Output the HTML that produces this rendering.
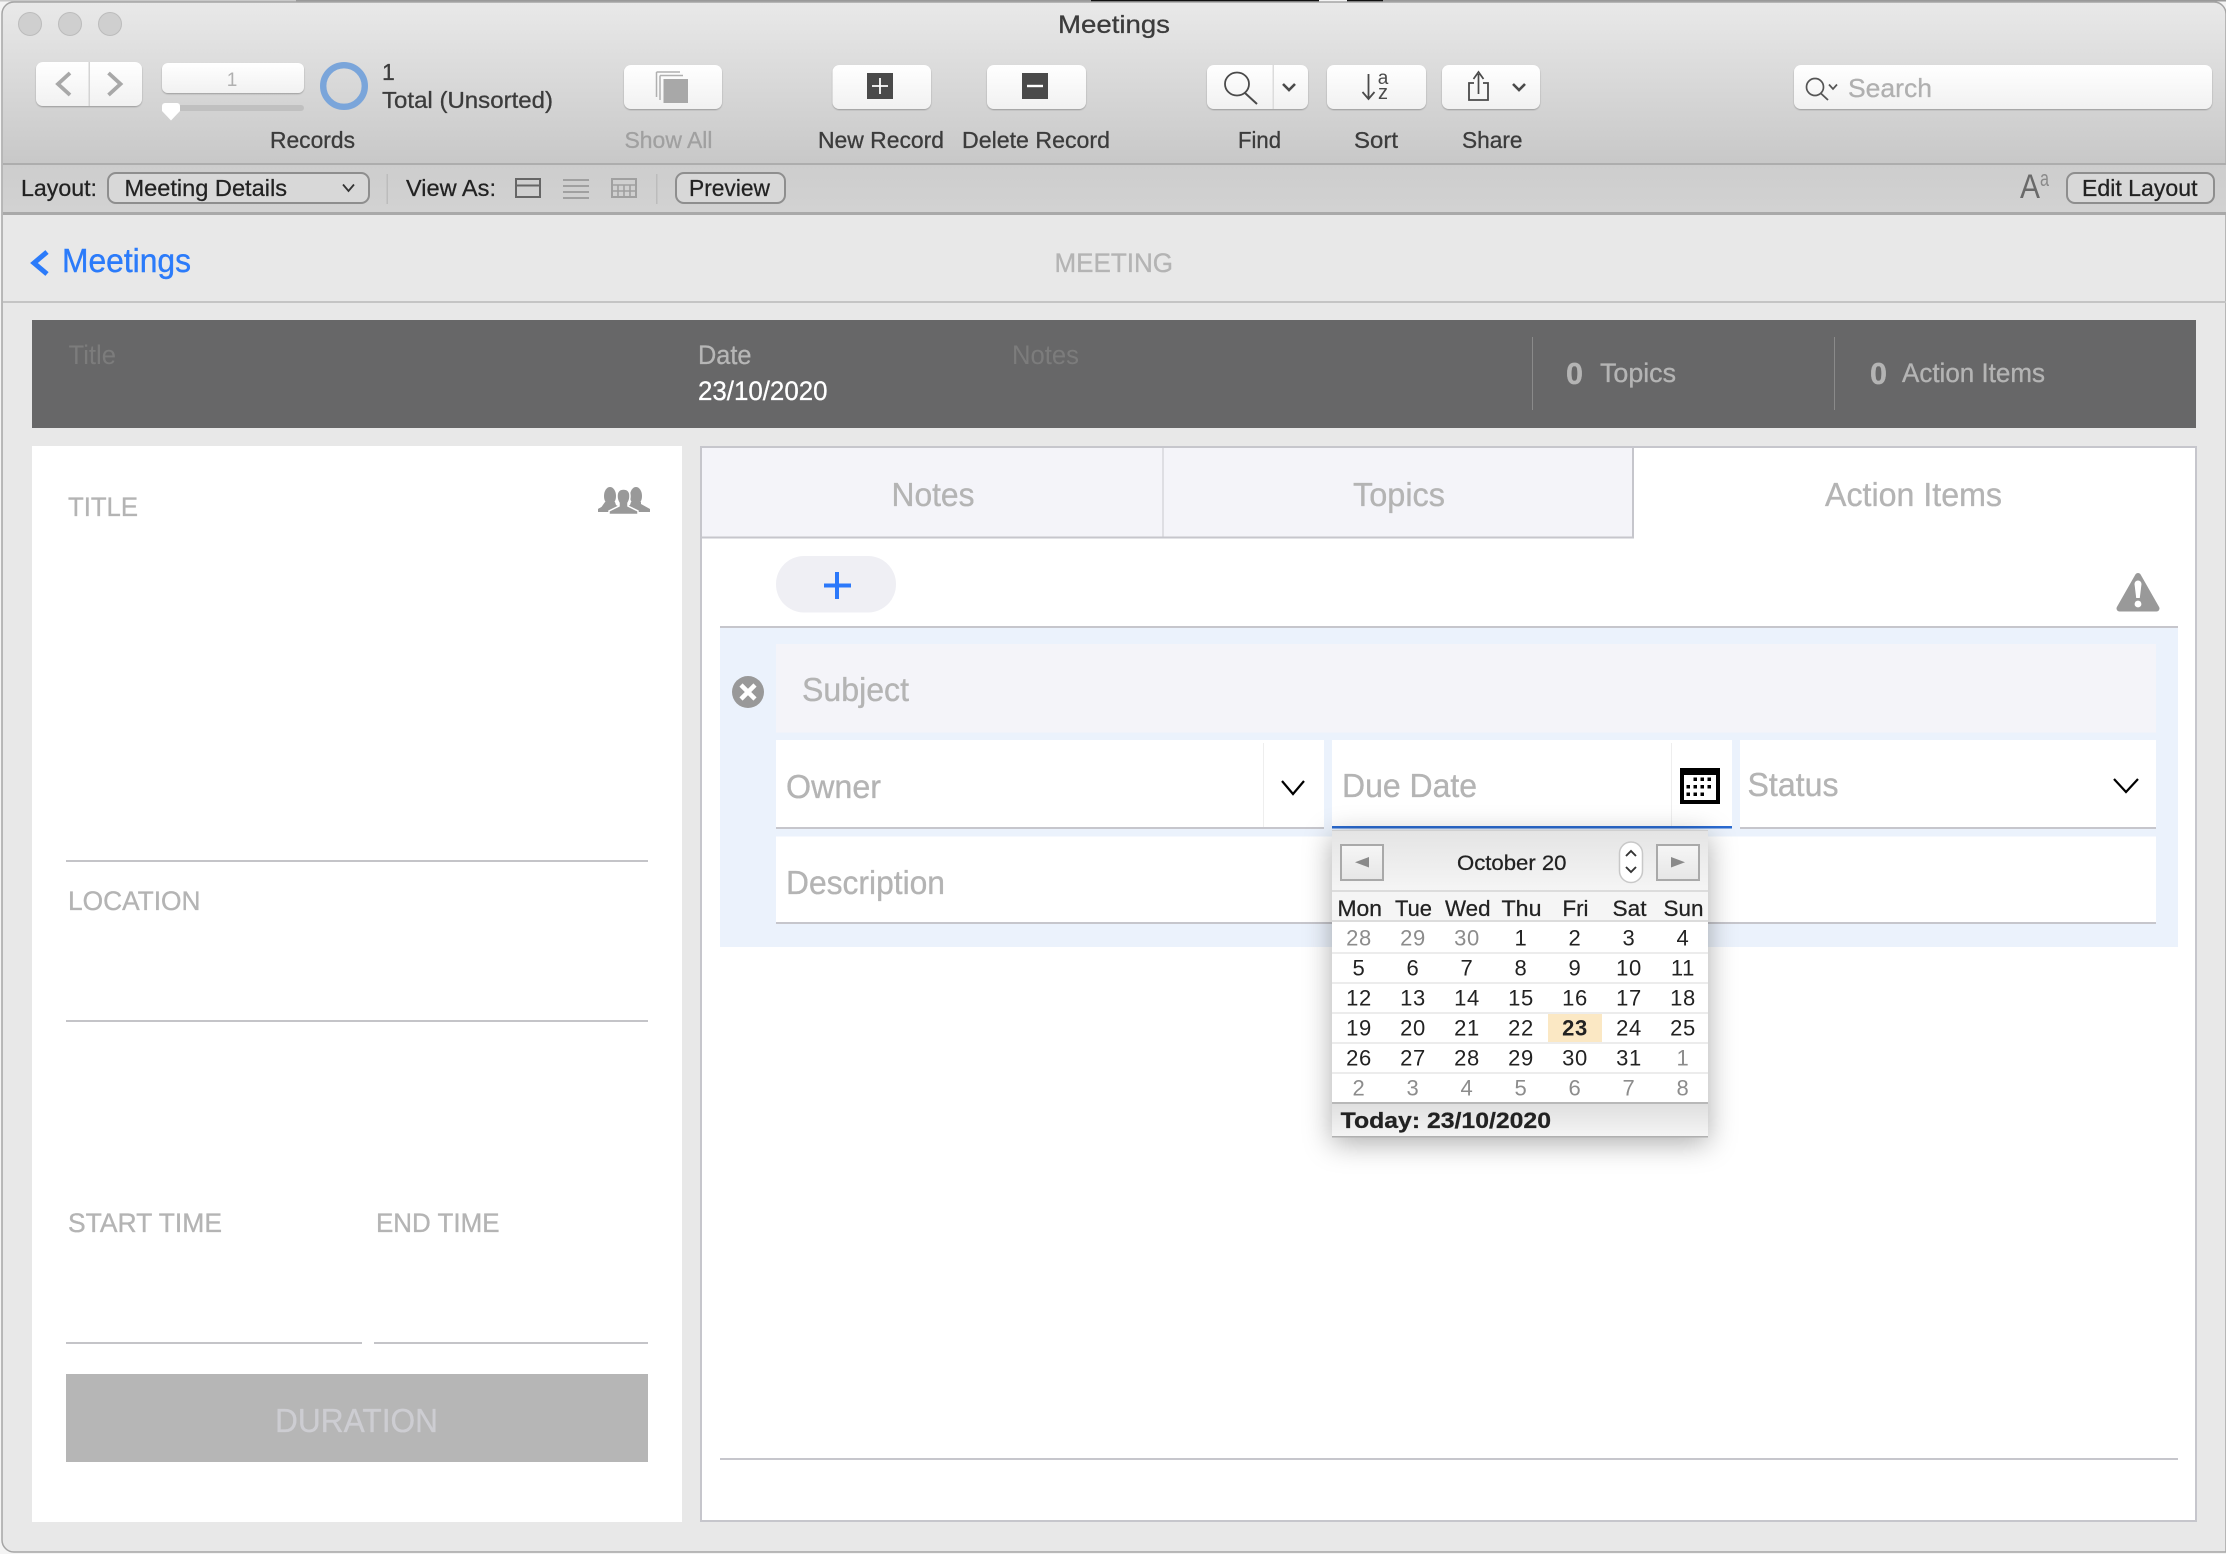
<!DOCTYPE html>
<html><head><meta charset="utf-8"><title>Meetings</title>
<style>
html,body{margin:0;padding:0;background:#f4f4f4;width:2226px;height:1554px;overflow:hidden}
svg{display:block}
text{font-family:"Liberation Sans",sans-serif}
text[fill="#b4b4b4"],g[fill="#b4b4b4"] text{stroke:#b4b4b4;stroke-width:.35}
text[fill="#3c3c3c"]{stroke:#3c3c3c;stroke-width:.3}
text[fill="#a0a0a0"]{stroke:#a0a0a0;stroke-width:.3}
text[fill="#222"]{stroke:#222;stroke-width:.25}
text[fill="#2b7bfa"]{stroke:#2b7bfa;stroke-width:.4}
</style></head>
<body>
<svg xmlns="http://www.w3.org/2000/svg" width="2226" height="1554" viewBox="0 0 2226 1554">
<defs>
<linearGradient id="tb" x1="0" y1="0" x2="0" y2="1"><stop offset="0" stop-color="#e9e9e9"/><stop offset="1" stop-color="#c8c8c8"/></linearGradient>
<linearGradient id="lb" x1="0" y1="0" x2="0" y2="1"><stop offset="0" stop-color="#cdcdcd"/><stop offset="1" stop-color="#d2d2d2"/></linearGradient>
<linearGradient id="btn" x1="0" y1="0" x2="0" y2="1"><stop offset="0" stop-color="#ffffff"/><stop offset="1" stop-color="#f1f1f1"/></linearGradient>
<linearGradient id="calh" x1="0" y1="0" x2="0" y2="1"><stop offset="0" stop-color="#e4e4e4"/><stop offset="1" stop-color="#f5f5f5"/></linearGradient>
<linearGradient id="calb" x1="0" y1="0" x2="0" y2="1"><stop offset="0" stop-color="#f6f6f6"/><stop offset="1" stop-color="#e6e6e6"/></linearGradient>
<linearGradient id="calf" x1="0" y1="0" x2="0" y2="1"><stop offset="0" stop-color="#dedede"/><stop offset="1" stop-color="#f5f5f5"/></linearGradient>
<filter id="sb" x="-5%" y="-20%" width="110%" height="150%"><feDropShadow dx="0" dy="1" stdDeviation="0.8" flood-color="#000" flood-opacity=".28"/></filter>
<filter id="pop" x="-25%" y="-25%" width="150%" height="150%"><feDropShadow dx="0" dy="6" stdDeviation="14" flood-color="#000" flood-opacity=".33"/></filter>
</defs>

<!-- desktop strip -->
<rect x="0" y="0" width="2226" height="1554" fill="#f4f4f4"/>
<rect x="0" y="0" width="296" height="1.500" fill="#c9c9c9"/>
<rect x="296" y="0" width="795" height="1.500" fill="#9a9a9a"/>
<rect x="1091" y="0" width="228" height="1.500" fill="#111"/>
<rect x="1347" y="0" width="36" height="1.500" fill="#111"/>
<rect x="1383" y="0" width="843" height="1.500" fill="#9a9a9a"/>

<!-- window -->
<path d="M2 14 a12 12 0 0 1 12-12 H2214 a12 12 0 0 1 12 12 V1552 H14 a12 12 0 0 1-12-12 Z" fill="#e8e8e8" stroke="#a5a5a5" stroke-width="1.500"/>
<path d="M3 163 V14 a11 11 0 0 1 11-11 H2214 a11 11 0 0 1 11 11 V163 H3 Z" fill="url(#tb)"/>
<rect x="3" y="163" width="2223" height="2" fill="#adadad"/>
<rect x="3" y="165" width="2223" height="47" fill="url(#lb)"/>
<rect x="3" y="212" width="2223" height="3" fill="#a9a9a9"/>

<!-- traffic lights -->
<circle cx="30" cy="24" r="11.500" fill="#cfcfcf" stroke="#bcbcbc"/>
<circle cx="70" cy="24" r="11.500" fill="#cfcfcf" stroke="#bcbcbc"/>
<circle cx="110" cy="24" r="11.500" fill="#cfcfcf" stroke="#bcbcbc"/>
<text x="1058" y="33" font-size="25" fill="#3c3c3c" textLength="112" lengthAdjust="spacingAndGlyphs">Meetings</text>

<!-- nav -->
<g filter="url(#sb)">
<rect x="36" y="62" width="106" height="44" rx="7" fill="url(#btn)"/>
<rect x="162" y="63" width="142" height="30" rx="6" fill="url(#btn)"/>
<rect x="624" y="65" width="98" height="44" rx="7" fill="url(#btn)"/>
<rect x="832.500" y="65" width="98.500" height="44" rx="7" fill="url(#btn)"/>
<rect x="987" y="65" width="99" height="44" rx="7" fill="url(#btn)"/>
<rect x="1207" y="65" width="101" height="44" rx="7" fill="url(#btn)"/>
<rect x="1327" y="65" width="99" height="44" rx="7" fill="url(#btn)"/>
<rect x="1442" y="65" width="98" height="44" rx="7" fill="url(#btn)"/>
<rect x="1794" y="65" width="418" height="44" rx="7" fill="url(#btn)"/>
</g>
<rect x="88.500" y="62" width="1.500" height="44" fill="#d4d4d4"/>
<path d="M70 73 L58 84 L70 95" fill="none" stroke="#a8a8a8" stroke-width="3.800"/>
<path d="M108.500 73 L120.500 84 L108.500 95" fill="none" stroke="#a8a8a8" stroke-width="3.800"/>
<text x="232" y="86" font-size="19" fill="#b0b0b0" text-anchor="middle">1</text>
<rect x="162" y="105" width="142" height="6" rx="3" fill="#c0c0c0"/>
<path d="M165 103 H177 a3 3 0 0 1 3 3 V111 L171 120.500 L162 111 V106 a3 3 0 0 1 3-3 Z" fill="#fff"/>
<circle cx="344" cy="86" r="20.800" fill="none" stroke="#7aa5da" stroke-width="6.400"/>
<text x="382" y="80" font-size="23" fill="#3c3c3c">1</text>
<text x="382" y="108" font-size="23.500" fill="#3c3c3c" textLength="171" lengthAdjust="spacingAndGlyphs">Total (Unsorted)</text>
<text x="270" y="148" font-size="23.500" fill="#3c3c3c" textLength="85" lengthAdjust="spacingAndGlyphs">Records</text>

<!-- show all -->
<path d="M656.500 72 H680 M656.500 72 V97 M660 75.500 H683 M660 75.500 V100" fill="none" stroke="#b0b0b0" stroke-width="1.500"/>
<rect x="663.500" y="79" width="24.500" height="24" fill="#a8a8a8"/>
<text x="624.500" y="148" font-size="23.500" fill="#a0a0a0" textLength="88" lengthAdjust="spacingAndGlyphs">Show All</text>

<!-- new/delete -->
<rect x="867" y="73" width="26" height="26" fill="#4a4a4a"/>
<path d="M880 78 V94 M872 86 H888" stroke="#fff" stroke-width="1.800" fill="none"/>
<rect x="1022" y="73" width="26" height="26" fill="#4a4a4a"/>
<path d="M1027 86 H1043" stroke="#fff" stroke-width="2.400" fill="none"/>
<text x="818" y="148" font-size="23.500" fill="#3c3c3c" textLength="126" lengthAdjust="spacingAndGlyphs">New Record</text>
<text x="962" y="148" font-size="23.500" fill="#3c3c3c" textLength="148" lengthAdjust="spacingAndGlyphs">Delete Record</text>

<!-- find -->
<rect x="1272.500" y="65" width="1.500" height="44" fill="#dcdcdc"/>
<ellipse cx="1237" cy="84" rx="12" ry="11.500" fill="none" stroke="#4a4a4a" stroke-width="1.800"/>
<path d="M1245 93 L1257 104" stroke="#4a4a4a" stroke-width="2" fill="none"/>
<path d="M1283 84 L1289 90 L1295 84" stroke="#4a4a4a" stroke-width="2.600" fill="none"/>
<text x="1238" y="148" font-size="23.500" fill="#3c3c3c" textLength="43" lengthAdjust="spacingAndGlyphs">Find</text>
<!-- sort -->
<path d="M1368.500 74 V98 M1362.500 92 L1368.500 99 L1374.500 92" stroke="#4a4a4a" stroke-width="1.800" fill="none"/>
<text x="1383" y="84" font-size="19" fill="#4a4a4a" text-anchor="middle">a</text>
<text x="1383" y="99" font-size="20" fill="#4a4a4a" text-anchor="middle">z</text>
<text x="1354" y="148" font-size="23.500" fill="#3c3c3c" textLength="44" lengthAdjust="spacingAndGlyphs">Sort</text>
<!-- share -->
<path d="M1474 83 H1469 V100 H1488 V83 H1483" fill="none" stroke="#4a4a4a" stroke-width="1.800"/>
<path d="M1478.500 74 V94 M1473.500 79 L1478.500 72 L1483.500 79" fill="none" stroke="#4a4a4a" stroke-width="1.700"/>
<path d="M1513 84 L1519 90 L1525 84" stroke="#4a4a4a" stroke-width="2.600" fill="none"/>
<text x="1462" y="148" font-size="23.500" fill="#3c3c3c" textLength="60.500" lengthAdjust="spacingAndGlyphs">Share</text>
<!-- search -->
<ellipse cx="1815" cy="87" rx="8.500" ry="8.500" fill="none" stroke="#555" stroke-width="1.700"/>
<path d="M1821 93.500 L1828 100" stroke="#555" stroke-width="1.800"/>
<path d="M1829 84.500 L1833 89 L1837 84.500" fill="none" stroke="#555" stroke-width="1.700"/>
<text x="1848" y="97" font-size="26" fill="#b0b0b0" stroke="#b0b0b0" stroke-width=".3" textLength="84" lengthAdjust="spacingAndGlyphs">Search</text>

<!-- layout bar -->
<text x="21" y="196" font-size="23" fill="#222" textLength="76" lengthAdjust="spacingAndGlyphs">Layout:</text>
<rect x="108" y="173" width="261" height="30" rx="8" fill="#d8d8d8" stroke="#8e8e8e" stroke-width="2"/>
<text x="124.500" y="196" font-size="23" fill="#222" textLength="162.500" lengthAdjust="spacingAndGlyphs">Meeting Details</text>
<path d="M343 184.500 L348.500 191 L354 184.500" fill="none" stroke="#333" stroke-width="1.800"/>
<rect x="386.500" y="174" width="1.500" height="30" fill="#bcbcbc"/>
<text x="406" y="196" font-size="23" fill="#222" textLength="90" lengthAdjust="spacingAndGlyphs">View As:</text>
<rect x="516" y="179" width="24" height="18" fill="none" stroke="#666" stroke-width="2"/>
<rect x="516" y="184.500" width="24" height="2" fill="#666"/>
<path d="M563 180 H589 M563 186 H589 M563 192 H589 M563 198 H589" stroke="#a0a0a0" stroke-width="2"/>
<rect x="612" y="179" width="24" height="18" fill="none" stroke="#a0a0a0" stroke-width="2"/>
<path d="M612 185 H636 M612 191 H636 M618 185 V197 M624 185 V197 M630 185 V197" stroke="#a0a0a0" stroke-width="1.600"/>
<rect x="656" y="174" width="1.500" height="30" fill="#bcbcbc"/>
<rect x="676" y="173" width="109" height="30" rx="8" fill="#d8d8d8" stroke="#8e8e8e" stroke-width="2"/>
<text x="689" y="196" font-size="23" fill="#222" textLength="81" lengthAdjust="spacingAndGlyphs">Preview</text>
<text x="2020" y="198" font-size="34" fill="#6a6a6a" textLength="20" lengthAdjust="spacingAndGlyphs">A</text>
<text x="2040" y="186" font-size="22" fill="#8a8a8a" textLength="9" lengthAdjust="spacingAndGlyphs">a</text>
<rect x="2067" y="173" width="147" height="30" rx="8" fill="#d8d8d8" stroke="#8e8e8e" stroke-width="2"/>
<text x="2082" y="196" font-size="23" fill="#222" textLength="115.500" lengthAdjust="spacingAndGlyphs">Edit Layout</text>

<!-- header -->
<path d="M47 252 L34 263 L47 274" fill="none" stroke="#2b7bfa" stroke-width="5"/>
<text x="62" y="272" font-size="33" fill="#2b7bfa" textLength="129" lengthAdjust="spacingAndGlyphs">Meetings</text>
<text x="1054.500" y="272" font-size="27" fill="#b4b4b4" textLength="118.500" lengthAdjust="spacingAndGlyphs">MEETING</text>
<rect x="3" y="301" width="2223" height="2" fill="#c4c4c4"/>

<!-- dark band -->
<rect x="32" y="320" width="2164" height="108" fill="#676768"/>
<text x="68.500" y="364" font-size="27" fill="#7c7c7c" textLength="47.500" lengthAdjust="spacingAndGlyphs">Title</text>
<text x="698" y="364" font-size="27" fill="#b6b6b6" stroke="#b6b6b6" stroke-width=".3" textLength="53.500" lengthAdjust="spacingAndGlyphs">Date</text>
<text x="698" y="400" font-size="27" fill="#fff" stroke="#fff" stroke-width=".3" textLength="129.500" lengthAdjust="spacingAndGlyphs">23/10/2020</text>
<text x="1012" y="364" font-size="27" fill="#7c7c7c" textLength="67" lengthAdjust="spacingAndGlyphs">Notes</text>
<rect x="1532" y="337" width="1" height="73" fill="#8a8a8a"/>
<rect x="1834" y="337" width="1" height="73" fill="#8a8a8a"/>
<text x="1566" y="384" font-size="31" font-weight="bold" fill="#b4b4b4" textLength="17" lengthAdjust="spacingAndGlyphs">0</text>
<text x="1600" y="382" font-size="27" fill="#b4b4b4" textLength="76" lengthAdjust="spacingAndGlyphs">Topics</text>
<text x="1870" y="384" font-size="31" font-weight="bold" fill="#b4b4b4" textLength="17" lengthAdjust="spacingAndGlyphs">0</text>
<text x="1902" y="382" font-size="27" fill="#b4b4b4" textLength="143" lengthAdjust="spacingAndGlyphs">Action Items</text>

<!-- left panel -->
<rect x="32" y="446" width="650" height="1076" fill="#fff"/>
<text x="68" y="516" font-size="27" fill="#b4b4b4" textLength="70" lengthAdjust="spacingAndGlyphs">TITLE</text>
<g fill="#999">
<ellipse cx="610" cy="496" rx="6" ry="9"/><path d="M605 502 h10 l1 3 l9 5 v2 h-27 v0 h-0 z M598 512 v-3 l9-5 z"/>
<ellipse cx="636" cy="496" rx="6" ry="9"/><path d="M631 502 h10 l0 2 l9 5 v3 h-23 l-5-3 l8-4 z"/>
<path d="M598 512 V509 L607 504 H614 L618 509 L612 512 Z"/>
</g>
<g fill="#999" stroke="#fff" stroke-width="1.500">
<path d="M609 514.500 V511 L619 506 L619 503 C617 500 617 497 617 496 C617 491 620 489 623.500 489 C627 489 630 491 630 496 C630 497 630 500 628 503 L628 506 L638 511 V514.500 Z"/>
</g>
<rect x="66" y="860" width="582" height="2" fill="#c4c4c8"/>
<text x="68" y="910" font-size="27" fill="#b4b4b4" textLength="132.500" lengthAdjust="spacingAndGlyphs">LOCATION</text>
<rect x="66" y="1020" width="582" height="2" fill="#c4c4c8"/>
<text x="68" y="1232" font-size="27" fill="#b4b4b4" textLength="154" lengthAdjust="spacingAndGlyphs">START TIME</text>
<text x="376" y="1232" font-size="27" fill="#b4b4b4" textLength="123.500" lengthAdjust="spacingAndGlyphs">END TIME</text>
<rect x="66" y="1342" width="296" height="2" fill="#c4c4c8"/>
<rect x="374" y="1342" width="274" height="2" fill="#c4c4c8"/>
<rect x="66" y="1374" width="582" height="88" fill="#b6b6b6"/>
<text x="275" y="1432" font-size="33" fill="#cdcdd2" stroke="#cdcdd2" stroke-width=".3" textLength="163" lengthAdjust="spacingAndGlyphs">DURATION</text>

<!-- right panel -->
<rect x="701" y="447" width="1495" height="1074" fill="#fff" stroke="#c6c6cc" stroke-width="2"/>
<rect x="702" y="448" width="930" height="89" fill="#f4f4f9"/>
<rect x="1162" y="448" width="2" height="89" fill="#dedee3"/>
<rect x="1632" y="447" width="2" height="91" fill="#c6c6cc"/>
<rect x="702" y="536.500" width="932" height="2" fill="#c6c6cc"/>
<text x="891.500" y="506" font-size="33" fill="#b4b4b4" textLength="83" lengthAdjust="spacingAndGlyphs">Notes</text>
<text x="1353" y="506" font-size="33" fill="#b4b4b4" textLength="92" lengthAdjust="spacingAndGlyphs">Topics</text>
<text x="1825" y="506" font-size="33" fill="#b4b4b4" textLength="177" lengthAdjust="spacingAndGlyphs">Action Items</text>

<rect x="776" y="556" width="120" height="56.500" rx="28" fill="#efeff4"/>
<path d="M837 572 V599 M824 585.500 H851" stroke="#2b78fa" stroke-width="4" fill="none"/>
<path d="M2138 576 L2156.500 608.500 H2119.500 Z" fill="#999" stroke="#999" stroke-width="6" stroke-linejoin="round"/>
<path d="M2134.500 584 a3.500 3.500 0 0 1 7 0 L2139.800 598 H2136.200 Z" fill="#fff"/>
<circle cx="2138" cy="604" r="3.400" fill="#fff"/>

<rect x="720" y="626" width="1458" height="2" fill="#c6c6cc"/>
<rect x="720" y="628" width="1458" height="319" fill="#ebf2fc"/>
<rect x="776" y="644" width="1380" height="88.500" fill="#f4f4f9"/>
<text x="802" y="701" font-size="33" fill="#b4b4b4" textLength="107" lengthAdjust="spacingAndGlyphs">Subject</text>
<circle cx="748" cy="692" r="16" fill="#999"/>
<path d="M741 685 L755 699 M755 685 L741 699" stroke="#fff" stroke-width="4.500"/>

<rect x="776" y="740" width="548" height="89" fill="#fff"/>
<rect x="776" y="827" width="548" height="2" fill="#c6c6cc"/>
<rect x="1263" y="743" width="1" height="84" fill="#eeeeee"/>
<text x="786" y="798" font-size="33" fill="#b4b4b4" textLength="95" lengthAdjust="spacingAndGlyphs">Owner</text>
<path d="M1282 781 L1293 794 L1304 781" fill="none" stroke="#000" stroke-width="2.200"/>

<rect x="1332" y="740" width="400" height="88" fill="#fff"/>
<rect x="1332" y="826" width="400" height="2.500" fill="#2a6ad0"/>
<rect x="1671" y="743" width="1" height="83" fill="#eeeeee"/>
<text x="1342" y="797" font-size="33" fill="#b4b4b4" textLength="135" lengthAdjust="spacingAndGlyphs">Due Date</text>
<rect x="1680" y="768" width="40" height="36" fill="#000"/>
<rect x="1684" y="775" width="32" height="25" fill="#fff"/>
<g fill="#000">
<rect x="1693.500" y="777.500" width="3.500" height="3.500"/><rect x="1700.500" y="777.500" width="3.500" height="3.500"/><rect x="1707.500" y="777.500" width="3.500" height="3.500"/>
<rect x="1686.500" y="785" width="3.500" height="3.500"/><rect x="1693.500" y="785" width="3.500" height="3.500"/><rect x="1700.500" y="785" width="3.500" height="3.500"/><rect x="1707.500" y="785" width="3.500" height="3.500"/>
<rect x="1686.500" y="792.500" width="3.500" height="3.500"/><rect x="1693.500" y="792.500" width="3.500" height="3.500"/><rect x="1700.500" y="792.500" width="3.500" height="3.500"/>
</g>

<rect x="1740" y="740" width="416" height="89" fill="#fff"/>
<rect x="1740" y="827" width="416" height="2" fill="#c6c6cc"/>
<text x="1747.500" y="796" font-size="33" fill="#b4b4b4" textLength="91" lengthAdjust="spacingAndGlyphs">Status</text>
<path d="M2114 779 L2126 792 L2138 779" fill="none" stroke="#000" stroke-width="2.200"/>

<rect x="776" y="836.500" width="1380" height="87.500" fill="#fff"/>
<rect x="776" y="922" width="1380" height="2" fill="#c6c6cc"/>
<text x="786" y="894" font-size="33" fill="#b4b4b4" textLength="159" lengthAdjust="spacingAndGlyphs">Description</text>

<rect x="720" y="1458" width="1458" height="2" fill="#c6c6cc"/>

<!-- calendar popup -->
<rect x="1332" y="830" width="376" height="307" fill="#fff" filter="url(#pop)"/>
<rect x="1332" y="830" width="376" height="61" fill="url(#calh)"/>
<rect x="1332" y="830" width="376" height="1" fill="#cfcfcf"/>
<rect x="1332" y="890" width="376" height="2" fill="#dcdcdc"/>
<rect x="1341" y="845" width="42" height="35" fill="url(#calb)" stroke="#a9a9a9" stroke-width="2"/>
<path d="M1369 857 V867.500 L1355 862.300 Z" fill="#8a8a8a"/>
<rect x="1657" y="845" width="42" height="35" fill="url(#calb)" stroke="#a9a9a9" stroke-width="2"/>
<path d="M1671 857 V867.500 L1685 862.300 Z" fill="#8a8a8a"/>
<text x="1457" y="870" font-size="21" fill="#222" textLength="109.500" lengthAdjust="spacingAndGlyphs">October 20</text>
<rect x="1619.500" y="842" width="23" height="40.500" rx="11.500" fill="#fff" stroke="#c8c8c8" stroke-width="1.500"/>
<path d="M1626 856 L1631 851 L1636 856 M1626 867 L1631 872 L1636 867" fill="none" stroke="#333" stroke-width="1.900"/>
<rect x="1332" y="892" width="376" height="28" fill="#f5f5f5"/>
<rect x="1332" y="920" width="376" height="2" fill="#dcdcdc"/>
<text x="1337.500" y="916" font-size="22" fill="#222" textLength="44.500" lengthAdjust="spacingAndGlyphs">Mon</text>
<text x="1395" y="916" font-size="22" fill="#222" textLength="37" lengthAdjust="spacingAndGlyphs">Tue</text>
<text x="1445" y="916" font-size="22" fill="#222" textLength="45.500" lengthAdjust="spacingAndGlyphs">Wed</text>
<text x="1501.500" y="916" font-size="22" fill="#222" textLength="40" lengthAdjust="spacingAndGlyphs">Thu</text>
<text x="1562.500" y="916" font-size="22" fill="#222" textLength="26" lengthAdjust="spacingAndGlyphs">Fri</text>
<text x="1612.500" y="916" font-size="22" fill="#222" textLength="34" lengthAdjust="spacingAndGlyphs">Sat</text>
<text x="1663.500" y="916" font-size="22" fill="#222" textLength="40" lengthAdjust="spacingAndGlyphs">Sun</text>
<g fill="#ececec">
<rect x="1332" y="952" width="376" height="2"/><rect x="1332" y="982" width="376" height="2"/><rect x="1332" y="1012" width="376" height="2"/><rect x="1332" y="1042" width="376" height="2"/><rect x="1332" y="1072" width="376" height="2"/>
</g>
<rect x="1548" y="1014" width="54" height="28" fill="#fbe8c4"/>
<g font-size="22" letter-spacing="0.700" text-anchor="middle" fill="#222">
<g fill="#8c8c8c"><text x="1359" y="945.700">28</text><text x="1413" y="945.700">29</text><text x="1467" y="945.700">30</text></g>
<text x="1521" y="945.700">1</text><text x="1575" y="945.700">2</text><text x="1629" y="945.700">3</text><text x="1683" y="945.700">4</text>
<text x="1359" y="975.700">5</text><text x="1413" y="975.700">6</text><text x="1467" y="975.700">7</text><text x="1521" y="975.700">8</text><text x="1575" y="975.700">9</text><text x="1629" y="975.700">10</text><text x="1683" y="975.700">11</text>
<text x="1359" y="1005.700">12</text><text x="1413" y="1005.700">13</text><text x="1467" y="1005.700">14</text><text x="1521" y="1005.700">15</text><text x="1575" y="1005.700">16</text><text x="1629" y="1005.700">17</text><text x="1683" y="1005.700">18</text>
<text x="1359" y="1035.700">19</text><text x="1413" y="1035.700">20</text><text x="1467" y="1035.700">21</text><text x="1521" y="1035.700">22</text><text x="1575" y="1035.700" font-weight="bold">23</text><text x="1629" y="1035.700">24</text><text x="1683" y="1035.700">25</text>
<text x="1359" y="1065.700">26</text><text x="1413" y="1065.700">27</text><text x="1467" y="1065.700">28</text><text x="1521" y="1065.700">29</text><text x="1575" y="1065.700">30</text><text x="1629" y="1065.700">31</text><text x="1683" y="1065.700" fill="#8c8c8c">1</text>
<g fill="#8c8c8c"><text x="1359" y="1095.700">2</text><text x="1413" y="1095.700">3</text><text x="1467" y="1095.700">4</text><text x="1521" y="1095.700">5</text><text x="1575" y="1095.700">6</text><text x="1629" y="1095.700">7</text><text x="1683" y="1095.700">8</text></g>
</g>
<rect x="1332" y="1102" width="376" height="35" fill="url(#calf)"/>
<rect x="1332" y="1102" width="376" height="2" fill="#b8b8b8"/>
<rect x="1332" y="1136" width="376" height="1.500" fill="#b0b0b0"/>
<text x="1340.700" y="1128" font-size="22" font-weight="bold" fill="#222" textLength="210.300" lengthAdjust="spacingAndGlyphs">Today: 23/10/2020</text>
</svg>
</body></html>
